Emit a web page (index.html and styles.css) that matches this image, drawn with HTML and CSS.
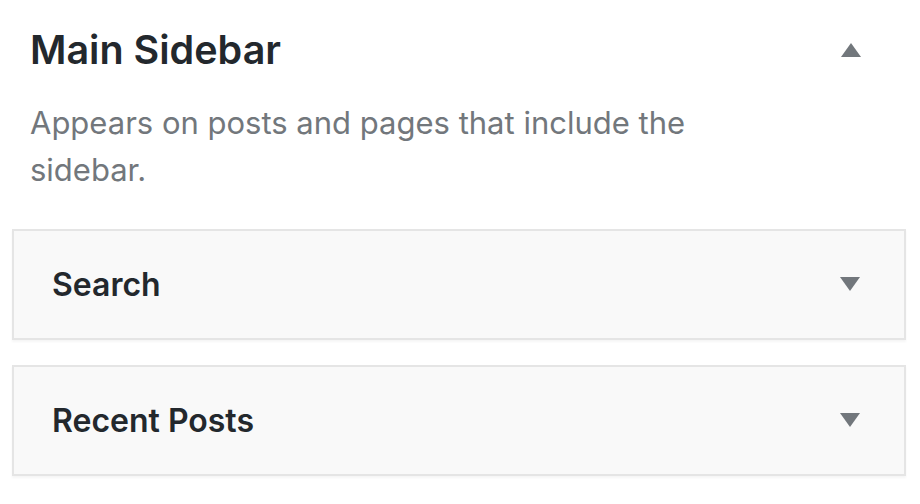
FILE: index.html
```html
<!DOCTYPE html>
<html>
<head>
<meta charset="utf-8">
<link rel="stylesheet" href="styles.css">
</head>
<body>
<div class="area">
  <div class="area-head">
    <div class="head-row">
      <h2 class="area-title">Main Sidebar</h2>
      <span class="arrow arrow-up"></span>
    </div>
    <p class="area-desc">Appears on posts and pages that include the sidebar.</p>
  </div>
  <div class="widgets">
    <div class="widget">
      <h3 class="widget-title">Search</h3>
      <span class="arrow arrow-down"></span>
    </div>
    <div class="widget">
      <h3 class="widget-title">Recent Posts</h3>
      <span class="arrow arrow-down"></span>
    </div>
  </div>
</div>
</body>
</html>
```

FILE: styles.css
```css
html, body {
  margin: 0;
  padding: 0;
  background: #fff;
}
body {
  font-family: Inter, "Noto Sans", sans-serif;
  width: 920px;
  height: 504px;
  overflow: hidden;
}
.area {
  padding: 0 14px 0 12px;
}
.area-head {
  padding: 0 0 0 18px;
}
.head-row {
  display: flex;
  align-items: center;
  justify-content: space-between;
  padding-top: 26px;
  padding-right: 45px;
}
.area-title {
  margin: 0;
  font-size: 39.5px;
  font-weight: 600;
  color: #23282d;
  line-height: 48px;
}
.area-desc {
  margin: 25px 0 0 0;
  font-size: 31px;
  line-height: 47px;
  color: #72777c;
  width: 700px;
}
.arrow {
  display: block;
  width: 0;
  height: 0;
  border-left: 10px solid transparent;
  border-right: 10px solid transparent;
}
.arrow-up {
  border-bottom: 14px solid #72777c;
}
.arrow-down {
  border-top: 14px solid #72777c;
  margin-top: -2px;
}
.widgets {
  margin-top: 36px;
  display: flex;
  flex-direction: column;
  gap: 25px;
}
.widget {
  display: flex;
  align-items: center;
  justify-content: space-between;
  box-sizing: border-box;
  height: 111px;
  background: #f9f9f9;
  border: 2px solid #e5e5e5;
  box-shadow: 0 2px 2px rgba(0,0,0,0.04);
  padding: 0 44px 0 38px;
}
.widget-title {
  margin: 0;
  font-size: 32px;
  font-weight: 600;
  color: #23282d;
}
```
